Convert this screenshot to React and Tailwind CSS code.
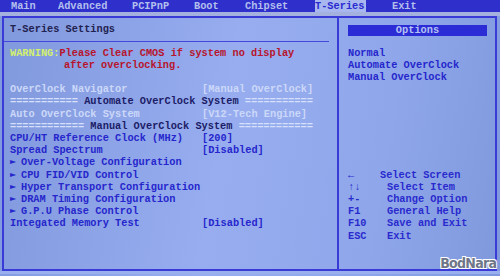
import React from "react";

const tabs = [
  { name: "Main", w: "w-[47px]" },
  { name: "Advanced", w: "w-[74px]" },
  { name: "PCIPnP", w: "w-[62px]" },
  { name: "Boot", w: "w-[51px]" },
  { name: "Chipset", w: "w-[70px]" },
  { name: "T-Series", w: "w-[77px]", active: true },
  { name: "Exit", w: "w-[60px]" },
];

const Row = ({ label, value, color = "text-[#2626cc]" }) => (
  <div className="flex">
    <div className={`w-[192px] ${color}`}>{label}</div>
    {value && <div className={color}>{value}</div>}
  </div>
);

const SubMenu = ({ label }) => (
  <div className="flex text-[#2626cc]">
    <span className="w-[11px] text-[8px] font-['DejaVu_Sans',sans-serif]">►</span>
    <span>{label}</span>
  </div>
);

const Divider = ({ text }) => (
  <div className="whitespace-pre">
    <span className="text-[#d6e0fa]">{"=".repeat(text.left)} </span>
    <span className="text-[#1c1c66]">{text.label}</span>
    <span className="text-[#d6e0fa]"> {"=".repeat(text.right)}</span>
  </div>
);

const help = [
  { k: "←", v: "Select Screen", w: "w-[32px]" },
  { k: "↑↓", v: "Select Item", w: "w-[39px]" },
  { k: "+-", v: "Change Option", w: "w-[39px]" },
  { k: "F1", v: "General Help", w: "w-[39px]" },
  { k: "F10", v: "Save and Exit", w: "w-[39px]" },
  { k: "ESC", v: "Exit", w: "w-[39px]" },
];

export default function App() {
  return (
    <div className="relative w-[500px] h-[276px] overflow-hidden bg-[linear-gradient(100deg,#8098dc_0%,#97adf0_45%,#8fa7ea_75%,#7f98dc_100%)] font-['Liberation_Mono',monospace] font-bold text-[10.3px] leading-[12.2px]">
      {/* menu bar */}
      <div className="h-[12px] bg-[#2f2fcc] flex items-center pl-[11px] text-[#b4c0ec] leading-[12px]">
        {tabs.map((t) => (
          <div key={t.name} className={`${t.w} shrink-0`}>
            <span className={t.active ? "bg-[#a8b8ee] text-[#2a2ad0] pr-[2px]" : ""}>
              {t.name}
            </span>
          </div>
        ))}
      </div>

      <div className="h-[4px] bg-[#a4b0de]" />

      {/* main box */}
      <div className="ml-[2px] mr-[3px] h-[255px] border-2 border-[#3a3ad6] flex">
        {/* left panel */}
        <div className="w-[333px] shrink-0 pt-[5px]">
          <div className="pl-[6px] text-[#222250]">T-Series Settings</div>
          <div className="mt-[6px] h-[1px] bg-[#4646dc] w-[325px]" />
          <div className="pl-[6px] mt-[5px]">
            <div className="flex">
              <span className="text-[#d2f06e]">WARNING:</span>
              <span className="text-[#b8142c]">Please Clear CMOS if system no display</span>
            </div>
            <div className="pl-[54px] text-[#b8142c]">after overclocking.</div>

            <div className="mt-[11.6px]">
              <Row label="OverClock Navigator" value="[Manual OverClock]" color="text-[#ccd8f8]" />
              <Divider text={{ left: 11, label: "Automate OverClock System", right: 11 }} />
              <Row label="Auto OverClock System" value="[V12-Tech Engine]" color="text-[#ccd8f8]" />
              <Divider text={{ left: 12, label: "Manual OverClock System", right: 12 }} />
              <Row label="CPU/HT Reference Clock (MHz)" value="[200]" />
              <Row label="Spread Spectrum" value="[Disabled]" />
              <SubMenu label="Over-Voltage Configuration" />
              <SubMenu label="CPU FID/VID Control" />
              <SubMenu label="Hyper Transport Configuration" />
              <SubMenu label="DRAM Timing Configuration" />
              <SubMenu label="G.P.U Phase Control" />
              <Row label="Integated Memory Test" value="[Disabled]" />
            </div>
          </div>
        </div>

        {/* right panel */}
        <div className="flex-1 border-l-2 border-[#3a3ad6] pl-[9px] pt-[7px] flex flex-col">
          <div className="w-[139px] h-[11px] bg-[#2c2cd6] text-[#b4c2f2] text-center leading-[11px]">
            Options
          </div>
          <div className="mt-[11px] text-[#2626cc]">
            <div>Normal</div>
            <div>Automate OverClock</div>
            <div>Manual OverClock</div>
          </div>
          <div className="mt-[85px] text-[#2a2ace]">
            {help.map((h) => (
              <div key={h.k} className="flex">
                <span className={`${h.w} shrink-0`}>{h.k}</span>
                <span>{h.v}</span>
              </div>
            ))}
          </div>
        </div>
      </div>

      <div className="h-[3px] bg-[#9ab0ee]" />

      {/* watermark */}
      <div className="absolute right-[4px] bottom-[5px] font-['DejaVu_Sans',sans-serif] font-bold text-[14px] leading-[15px] text-[#6e7688] [text-shadow:1px_1px_0_#fff,-1px_-1px_0_#fff,1px_-1px_0_#fff,-1px_1px_0_#fff] tracking-[-0.8px] scale-x-90 origin-right">
        BodNara
      </div>
    </div>
  );
}
